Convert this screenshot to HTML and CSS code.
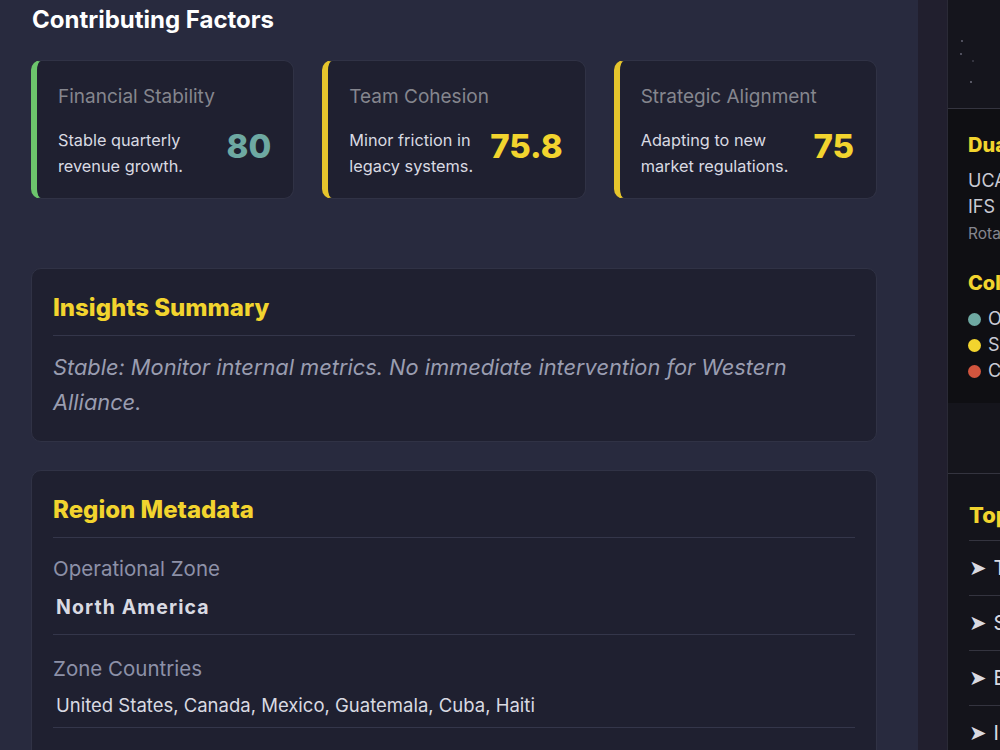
FILE: index.html
```html
<!DOCTYPE html>
<html lang="en">
<head>
    <meta charset="UTF-8">
    <meta name="viewport" content="width=device-width, initial-scale=1.0">
    <title>Region Overview</title>
    <link rel="stylesheet" href="styles.css">
</head>
<body>
    <main class="main">
        <h2 class="section-title">Contributing Factors</h2>

        <div class="factors">
            <div class="factor good">
                <div class="factor-name">Financial Stability</div>
                <div class="factor-row">
                    <p class="factor-desc">Stable quarterly revenue growth.</p>
                    <span class="factor-value">80</span>
                </div>
            </div>
            <div class="factor warn">
                <div class="factor-name">Team Cohesion</div>
                <div class="factor-row">
                    <p class="factor-desc">Minor friction in legacy systems.</p>
                    <span class="factor-value">75.8</span>
                </div>
            </div>
            <div class="factor warn">
                <div class="factor-name">Strategic Alignment</div>
                <div class="factor-row">
                    <p class="factor-desc">Adapting to new market regulations.</p>
                    <span class="factor-value">75</span>
                </div>
            </div>
        </div>

        <section class="panel insights">
            <h3 class="panel-title">Insights Summary</h3>
            <p class="insight-text">Stable: Monitor internal metrics. No immediate intervention for Western Alliance.</p>
        </section>

        <section class="panel metadata">
            <h3 class="panel-title">Region Metadata</h3>
            <div class="meta-row">
                <div class="meta-label">Operational Zone</div>
                <div class="meta-value strong">North America</div>
            </div>
            <div class="meta-row">
                <div class="meta-label">Zone Countries</div>
                <div class="meta-value">United States, Canada, Mexico, Guatemala, Cuba, Haiti</div>
            </div>
            <div class="meta-row">
                <div class="meta-label">Alliance</div>
                <div class="meta-value">Western Alliance</div>
            </div>
        </section>
    </main>

    <div class="gutter"></div>

    <aside class="sidebar">
        <div class="starfield">
            <svg width="53" height="108" viewBox="0 0 53 108">
                <circle cx="14" cy="41" r="0.9" fill="#6c6c7c"/>
                <circle cx="13" cy="54" r="0.9" fill="#6c6c7c"/>
                <circle cx="25" cy="61" r="0.7" fill="#6c6c7c"/>
                <circle cx="23" cy="82" r="0.9" fill="#7a7a88"/>
            </svg>
        </div>

        <div class="legend-panel">
            <h4 class="side-title">Dual</h4>
            <div class="clock-line">UCA</div>
            <div class="clock-line">IFS</div>
            <div class="clock-note">Rota</div>

            <h4 class="side-title legend-title">Col</h4>
            <ul class="legend">
                <li><span class="dot teal"></span>O</li>
                <li><span class="dot yellow"></span>S</li>
                <li><span class="dot red"></span>C</li>
            </ul>
        </div>

        <div class="spacer"></div>

        <div class="top-panel">
            <h4 class="side-title">Top</h4>
            <ul class="top-list">
                <li><span class="arrow">&#10148;</span>T</li>
                <li><span class="arrow">&#10148;</span>S</li>
                <li><span class="arrow">&#10148;</span>E</li>
                <li><span class="arrow">&#10148;</span>I</li>
            </ul>
        </div>
    </aside>
</body>
</html>
```

FILE: styles.css
```css
body {
    margin: 0;
    padding: 0;
    height: 750px;
    overflow: hidden;
    display: flex;
    font-family: Inter, "Noto Sans", sans-serif;
    background-color: #282a3e;
    color: #d6d7e0;
}

.main {
    width: 918px;
    flex-shrink: 0;
    box-sizing: border-box;
    padding: 5px 41px 0 31px;
    background-color: #282a3e;
}

.section-title {
    margin: 0 0 25px 1px;
    font-size: 24px;
    line-height: 30px;
    font-weight: 700;
    color: #ffffff;
}

.factors {
    display: grid;
    grid-template-columns: repeat(3, 1fr);
    gap: 28px;
    margin-bottom: 69px;
}

.factor {
    height: 139px;
    box-sizing: border-box;
    padding: 23px 22px 21px 21px;
    background-color: #1f2030;
    border: 1px solid #303245;
    border-left: 6px solid #6cc56c;
    border-radius: 10px;
}

.factor.warn {
    border-left-color: #e6c52c;
}

.factor-name {
    font-size: 19px;
    line-height: 26px;
    color: #85868e;
}

.factor-row {
    display: flex;
    align-items: flex-start;
    justify-content: space-between;
    margin-top: 17px;
}

.factor-desc {
    margin: 0;
    flex: 1 1 auto;
    max-width: 156px;
    font-size: 16.3px;
    line-height: 26px;
    color: #d9dae2;
}

.factor-value {
    flex-shrink: 0;
    font-size: 33px;
    line-height: 38px;
    font-weight: 800;
    color: #f2d42e;
}

.factor.good .factor-value {
    color: #6ea9a2;
}

.panel {
    background-color: #1f2030;
    border: 1px solid #303245;
    border-radius: 10px;
    padding: 24px 21px 21px 21px;
    margin-bottom: 28px;
}

.panel-title {
    margin: 0;
    padding-bottom: 12px;
    border-bottom: 1px solid #34364a;
    font-size: 24px;
    line-height: 30px;
    font-weight: 800;
    color: #f2d42e;
}

.insight-text {
    margin: 14px 0 0 0;
    font-size: 21.8px;
    line-height: 35px;
    font-style: italic;
    color: #9a9db0;
}

.meta-row {
    padding: 17px 0 14px 0;
    border-bottom: 1px solid #34364a;
}

.meta-row + .meta-row {
    padding: 20px 0 10px 0;
}

.meta-label {
    font-size: 20.5px;
    line-height: 28px;
    color: #8d91a8;
}

.meta-value {
    margin-top: 10px;
    padding-left: 3px;
    font-size: 18.5px;
    line-height: 24px;
    color: #d9dae2;
}

.meta-value.strong {
    margin-top: 11px;
    font-size: 19.5px;
    line-height: 26px;
    font-weight: 700;
    letter-spacing: 1.1px;
}

.gutter {
    width: 29px;
    flex-shrink: 0;
    background-color: #211f2e;
}

.sidebar {
    flex: 1;
    display: flex;
    flex-direction: column;
    background-color: #15151d;
    border-left: 1px solid #2a2a36;
    overflow: hidden;
    white-space: nowrap;
}

.starfield {
    height: 108px;
    flex-shrink: 0;
    background-color: #15151d;
    border-bottom: 1px solid #34343f;
}

.starfield svg {
    display: block;
}

.legend-panel {
    height: 294px;
    flex-shrink: 0;
    box-sizing: border-box;
    padding: 23px 0 0 20px;
    background-color: #0f0f13;
}

.side-title {
    margin: 0;
    font-size: 20px;
    line-height: 26px;
    font-weight: 800;
    color: #f2d42e;
}

.clock-line {
    font-size: 18px;
    line-height: 26px;
    color: #c9cad3;
}

.legend-panel .side-title {
    margin-bottom: 10px;
}

.clock-note {
    font-size: 15.5px;
    line-height: 28px;
    color: #85868f;
}

.legend-title {
    margin-top: 22px;
}

.legend {
    list-style: none;
    margin: 0;
    padding: 0;
}

.legend li {
    display: flex;
    align-items: center;
    gap: 7px;
    font-size: 18px;
    line-height: 26px;
    color: #c9cad3;
}

.dot {
    width: 13px;
    height: 13px;
    border-radius: 50%;
    flex-shrink: 0;
}

.dot.teal { background-color: #6ea9a2; }
.dot.yellow { background-color: #f2d42e; }
.dot.red { background-color: #d2553e; }

.spacer {
    height: 70px;
    flex-shrink: 0;
    background-color: #15151c;
}

.top-panel {
    flex: 1;
    padding: 28px 0 0 21px;
    background-color: #14141b;
    border-top: 1px solid #34343f;
}

.top-panel .side-title {
    font-size: 22px;
    padding-bottom: 12px;
    border-bottom: 1px solid #34343f;
}

.top-list {
    list-style: none;
    margin: 0;
    padding: 0;
}

.top-list li {
    display: flex;
    align-items: center;
    height: 55px;
    box-sizing: border-box;
    border-bottom: 1px solid #34343f;
    font-size: 20px;
    color: #d9dae2;
}

.arrow {
    margin-right: 7px;
    font-family: "DejaVu Sans", sans-serif;
    font-size: 21px;
    color: #d9dae2;
}
```
